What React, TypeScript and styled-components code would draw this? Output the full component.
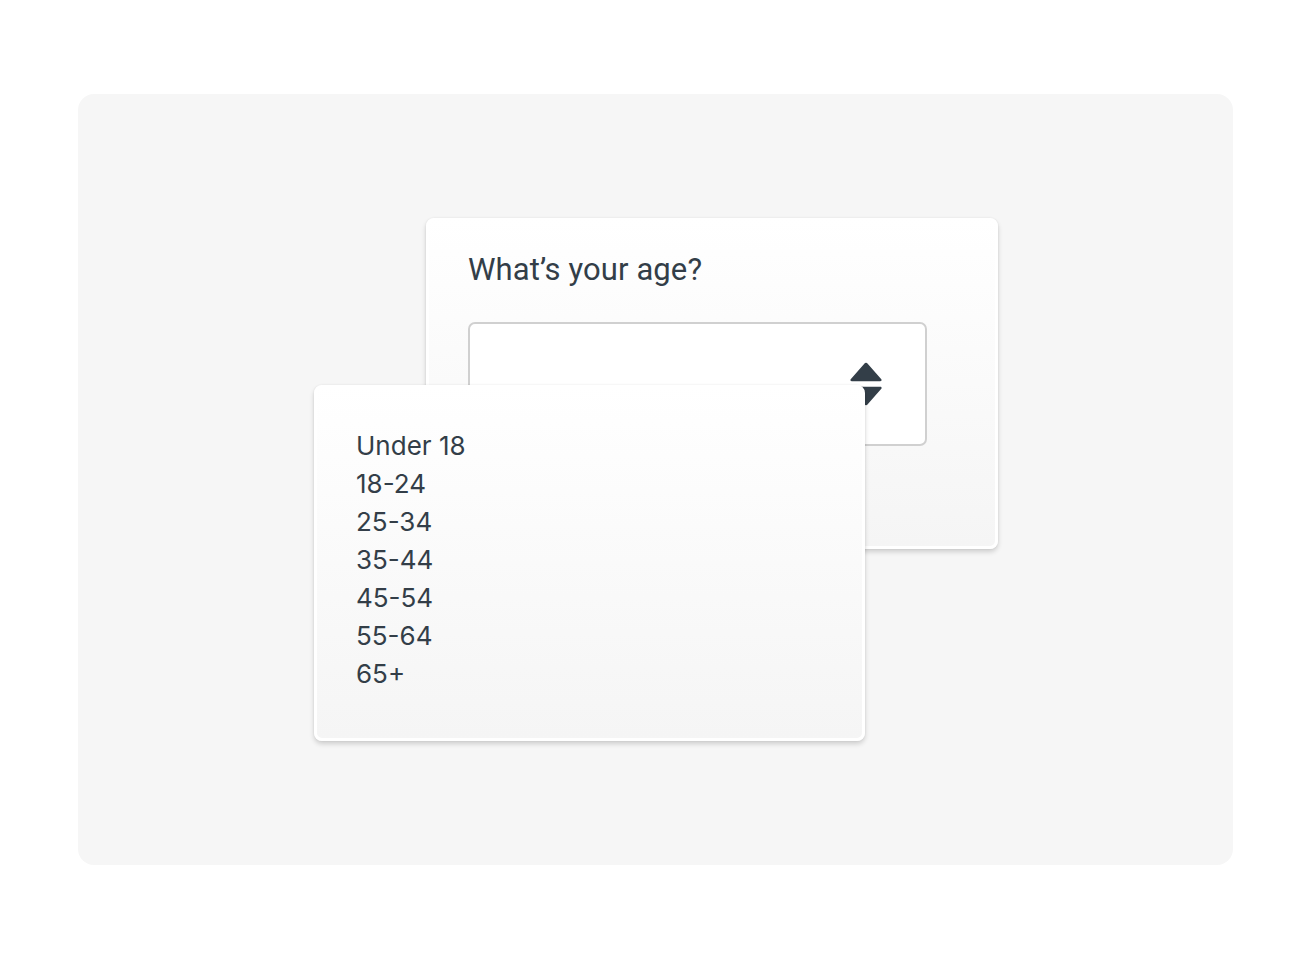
import React from "react";
import styled, { createGlobalStyle } from "styled-components";

const ink = "#333e48";

const Global = createGlobalStyle`
  html, body {
    margin: 0;
    padding: 0;
    background: #ffffff;
  }
  body {
    font-family: Roboto, "Liberation Sans", sans-serif;
    color: ${ink};
  }
`;

const Page = styled.div`
  width: 1312px;
  height: 961px;
  box-sizing: border-box;
  padding: 94px 79px 96px 78px;
  display: flex;
`;

const Panel = styled.div`
  flex: 1;
  background: #f6f6f6;
  border-radius: 16px;
  display: grid;
  place-content: center;
`;

const Stage = styled.div`
  display: grid;
  grid-template-columns: 683px;
  grid-template-rows: 523px;
`;

const Card = styled.div<{ $w: number; $h: number; $top: number; $left: number }>`
  grid-area: 1 / 1;
  align-self: start;
  justify-self: start;
  margin: ${(p) => p.$top}px 0 0 ${(p) => p.$left}px;
  width: ${(p) => p.$w}px;
  height: ${(p) => p.$h}px;
  box-sizing: border-box;
  border: 3px solid #ffffff;
  border-top-width: 1px;
  border-radius: 8px;
  background: linear-gradient(180deg, #ffffff 0%, #f5f5f5 100%);
  box-shadow: 0 3px 5px rgba(0, 0, 0, 0.16), 0 0 2px rgba(0, 0, 0, 0.08);
`;

const QuestionCard = styled(Card)`
  padding: 31px 39px 0 39px;
`;

const Title = styled.h2`
  margin: 0;
  font-family: Roboto, "Liberation Sans", sans-serif;
  font-weight: 400;
  font-size: 31px;
  line-height: 40px;
  letter-spacing: 0.1px;
  color: ${ink};
`;

const SelectBox = styled.div`
  margin-top: 32px;
  width: 459px;
  height: 124px;
  box-sizing: border-box;
  border: 2px solid #d0d0d0;
  border-radius: 7px;
  background: #ffffff;
  display: flex;
  align-items: center;
  justify-content: flex-end;
  padding-right: 42px;
`;

const ListCard = styled(Card)`
  padding: 41px 0 0 39px;
`;

const Options = styled.ul`
  list-style: none;
  margin: 0;
  padding: 0;
`;

const Option = styled.li`
  font-family: Inter, "Noto Sans", sans-serif;
  font-size: 26px;
  line-height: 38px;
  color: ${ink};
`;

const SortIcon = () => (
  <svg width="34" height="44" viewBox="0 0 34 44" fill={ink}>
    <path d="M15.3 1.8a2 2 0 0 1 3.4 0l13.6 15.4c.7.9.2 2-1 2H2.7c-1.2 0-1.7-1.1-1-2z" />
    <path d="M15.3 42.2a2 2 0 0 0 3.4 0l13.6-15.4c.7-.9.2-2-1-2H2.7c-1.2 0-1.7 1.1-1 2z" />
  </svg>
);

const ages = ["Under 18", "18-24", "25-34", "35-44", "45-54", "55-64", "65+"];

export default function App() {
  return (
    <>
      <Global />
      <Page>
        <Panel>
          <Stage>
            <QuestionCard $w={572} $h={331} $top={0} $left={112}>
              <Title>What’s your age?</Title>
              <SelectBox>
                <SortIcon />
              </SelectBox>
            </QuestionCard>
            <ListCard $w={551} $h={356} $top={167} $left={0}>
              <Options>
                {ages.map((a) => (
                  <Option key={a}>{a}</Option>
                ))}
              </Options>
            </ListCard>
          </Stage>
        </Panel>
      </Page>
    </>
  );
}
